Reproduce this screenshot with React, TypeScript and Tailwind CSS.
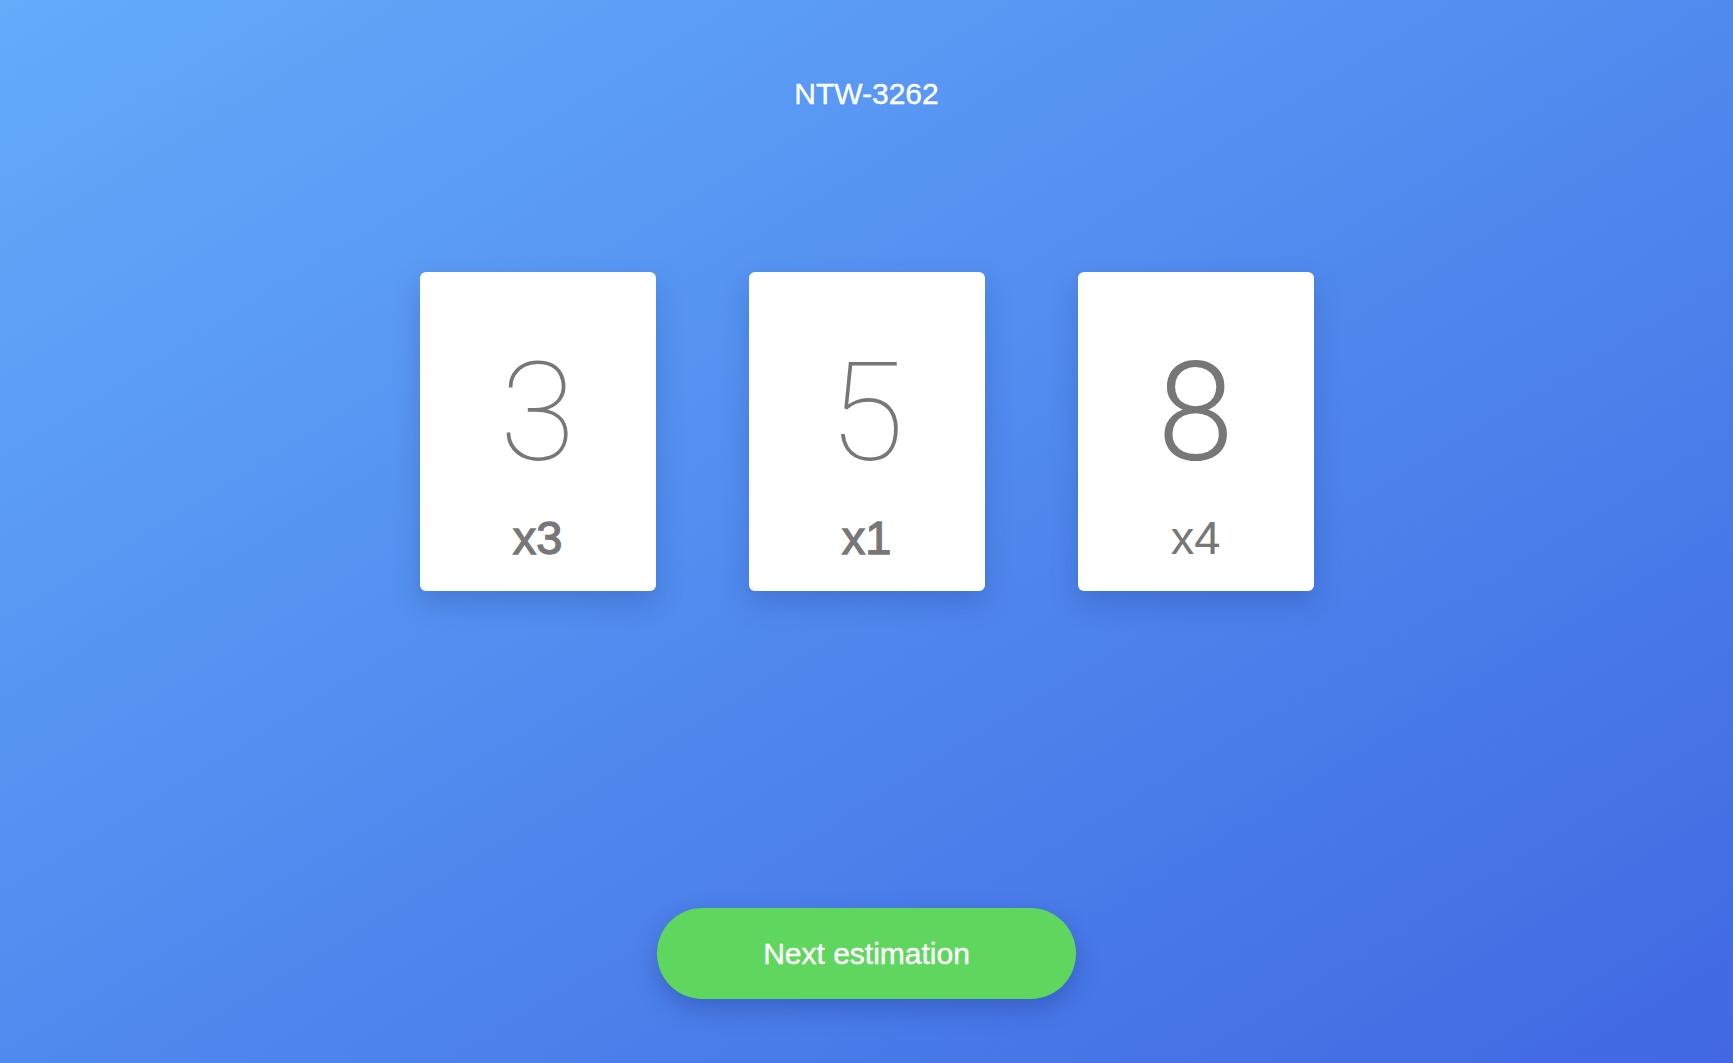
const cards = [
  { value: '3', count: 'x3', thin: true },
  { value: '5', count: 'x1', thin: true },
  { value: '8', count: 'x4', thin: false },
];

export default function App() {
  return (
    <div className="flex h-screen w-full flex-col items-center bg-gradient-to-br from-[#64abfa] to-[#4168e2] font-['Liberation_Sans',Arial,sans-serif]">
      <h1 className="pt-[79px] text-[30px] leading-none font-normal text-white [-webkit-text-stroke:0.4px_#ffffff]">
        NTW-3262
      </h1>

      <div className="mt-[163px] flex gap-[93px]">
        {cards.map((card) => (
          <div
            key={card.value}
            className="flex h-[319px] w-[236px] flex-col items-center rounded-[6px] bg-white shadow-[0_12px_28px_rgba(20,40,120,0.22)]"
          >
            <div
              className={
                card.thin
                  ? "pt-[72px] font-['Roboto',sans-serif] text-[138px] leading-none font-thin text-[#777777]"
                  : "pt-[72px] font-['Roboto',sans-serif] text-[138px] leading-none font-light text-[#777777]"
              }
            >
              {card.value}
            </div>
            <div
              className={
                card.thin
                  ? 'mt-[32px] text-[47px] leading-none font-normal text-[#777777] [-webkit-text-stroke:1.3px_#777777]'
                  : 'mt-[32px] text-[47px] leading-none font-normal text-[#777777]'
              }
            >
              {card.count}
            </div>
          </div>
        ))}
      </div>

      <button
        type="button"
        className="mt-[317px] flex h-[91px] w-[419px] items-center justify-center rounded-full bg-[#5fd75f] text-[30px] leading-none text-white shadow-[0_10px_24px_rgba(20,40,120,0.3)] [-webkit-text-stroke:0.4px_#ffffff]"
      >
        Next estimation
      </button>
    </div>
  );
}
